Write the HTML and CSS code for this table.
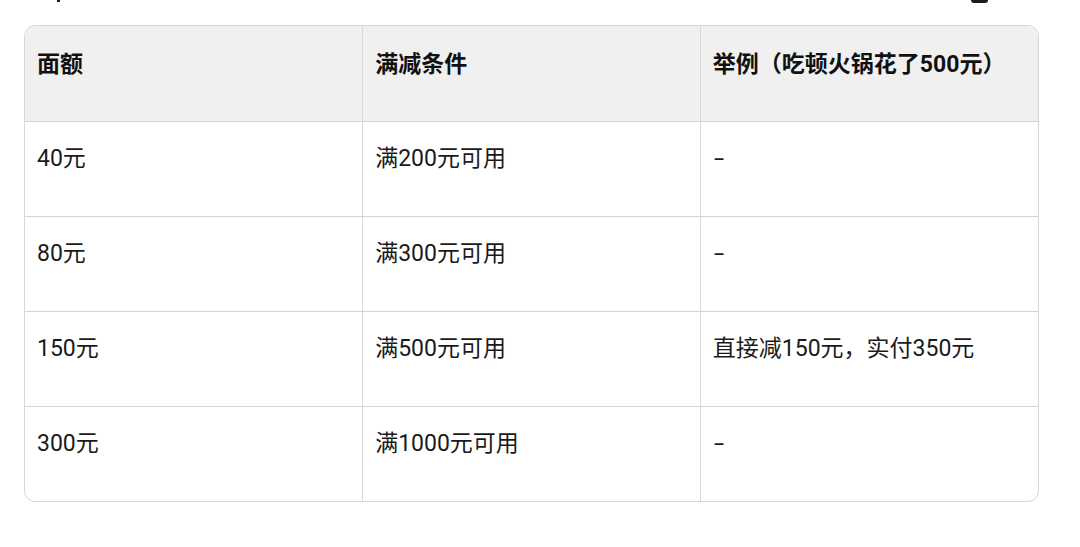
FILE: index.html
```html
<!DOCTYPE html>
<html lang="zh-CN">
<head>
<meta charset="utf-8">
<link rel="stylesheet" href="styles.css">
</head>
<body>
<div class="page">
  <span class="mark mark-left"></span>
  <span class="mark mark-right"></span>
  <div class="table-wrap">
    <table class="table">
      <thead>
        <tr>
          <th>面额</th>
          <th>满减条件</th>
          <th>举例（吃顿火锅花了500元）</th>
        </tr>
      </thead>
      <tbody>
        <tr><td>40元</td><td>满200元可用</td><td><span class="dash">-</span></td></tr>
        <tr><td>80元</td><td>满300元可用</td><td><span class="dash">-</span></td></tr>
        <tr><td>150元</td><td>满500元可用</td><td>直接减150元，实付350元</td></tr>
        <tr><td>300元</td><td>满1000元可用</td><td><span class="dash">-</span></td></tr>
      </tbody>
    </table>
  </div>
</div>
</body>
</html>
```

FILE: styles.css
```css
html, body {
  margin: 0;
  padding: 0;
  background: #ffffff;
}
body {
  font-family: "Roboto", "Noto Sans CJK SC", sans-serif;
  color: #1a1a1a;
}
.page {
  position: relative;
  width: 1080px;
  height: 547px;
  padding: 25px 41px 0 24px;
  box-sizing: border-box;
}
.mark {
  position: absolute;
  top: 0;
  background: #1a1a1a;
}
.mark-left {
  left: 57px;
  width: 3px;
  height: 2px;
}
.mark-right {
  left: 971px;
  width: 17px;
  height: 3px;
  border-radius: 0 0 4px 4px;
}
.table-wrap {
  border: 1px solid #d6d6d6;
  border-radius: 11px;
  overflow: hidden;
  width: 1015px;
  box-sizing: border-box;
}
.table {
  width: 100%;
  border-collapse: collapse;
  table-layout: fixed;
}
.table th,
.table td {
  height: 95px;
  box-sizing: border-box;
  padding: 23px 12px 0 12px;
  vertical-align: top;
  text-align: left;
  font-size: 23px;
  line-height: 28px;
  border-right: 1px solid #d9d9d9;
  border-bottom: 1px solid #d3d3d3;
}
.table th:last-child,
.table td:last-child {
  border-right: none;
}
.table tbody tr:last-child td {
  border-bottom: none;
}
.table th {
  padding-top: 25px;
  background: #f0f0f0;
  font-weight: 700;
  color: #111;
}
.table td {
  font-weight: 400;
}
.dash {
  display: inline-block;
  transform: scaleX(1.6);
  transform-origin: left center;
  margin-left: 1px;
}
```
